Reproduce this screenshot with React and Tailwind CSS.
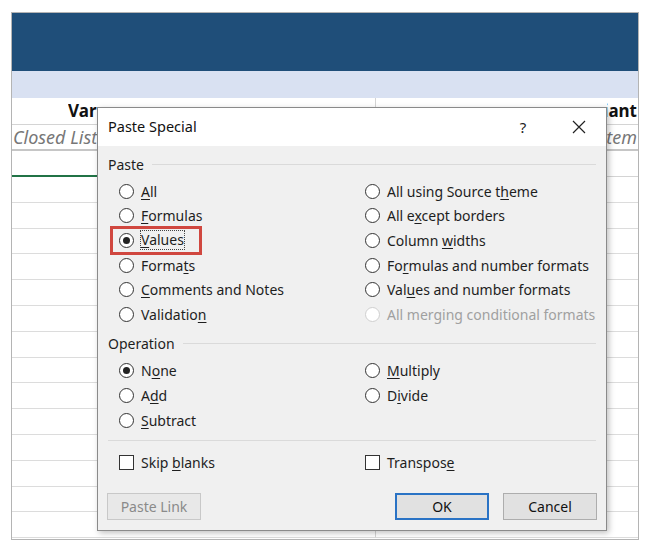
import React from "react";

const FONT = { fontFamily: '"Noto Sans", "Open Sans", sans-serif' };

function Label({ text, k }) {
  // underline the access key letter at index k
  if (k == null || k < 0) return <span>{text}</span>;
  return (
    <span>
      {text.slice(0, k)}
      <span className="underline underline-offset-2">{text[k]}</span>
      {text.slice(k + 1)}
    </span>
  );
}

function Radio({ text, k, checked, disabled, focus }) {
  return (
    <div className="flex items-center h-[24.6px]">
      <span
        className={`w-[15px] h-[15px] rounded-full border bg-white flex items-center justify-center shrink-0 ${
          disabled ? "border-[#cfcfcf]" : "border-[#333]"
        }`}
      >
        {checked && <span className="w-[7px] h-[7px] rounded-full bg-[#222]" />}
      </span>
      <span
        className={`ml-[7px] ${disabled ? "text-[#a0a0a0]" : "text-[#1e1e1e]"} ${
          focus ? "outline outline-1 outline-dotted outline-[#444] outline-offset-0 leading-[18px]" : ""
        }`}
      >
        <Label text={text} k={k} />
      </span>
    </div>
  );
}

function Check({ text, k }) {
  return (
    <div className="flex items-center h-[24px]">
      <span className="w-[15px] h-[15px] border border-[#333] bg-white shrink-0" />
      <span className="ml-[7px] text-[#1e1e1e]">
        <Label text={text} k={k} />
      </span>
    </div>
  );
}

function GroupLabel({ text }) {
  return (
    <div className="flex items-center h-[20px]">
      <span className="text-[#1e1e1e]">{text}</span>
      <span className="flex-1 ml-[8px] border-t border-[#dadada]" />
    </div>
  );
}

function Sheet() {
  const rows = Array.from({ length: 14 });
  return (
    <div className="ml-[11px] mt-[12px] w-[628px] h-[528px] border border-[#b4b4b4] flex flex-col overflow-hidden">
      <div className="h-[58px] bg-[#1f4e79] shrink-0" />
      <div className="h-[27px] bg-[#d9e1f2] shrink-0" />
      <div className="flex h-[27px] border-b border-[#d4d4d4] shrink-0 font-bold text-[17px] text-[#111]">
        <div className="w-[364px] border-r border-[#d4d4d4] flex items-center pl-[56px]">
          {/* the rest of the heading sits under the dialog */}
          <div className="w-[29px] overflow-hidden whitespace-nowrap">Variant Option Name</div>
        </div>
        <div className="flex-1 flex items-center justify-end pr-[1px]">
          <div className="w-[30px] overflow-hidden whitespace-nowrap flex justify-end">
            <span>Default Variant</span>
          </div>
        </div>
      </div>
      <div className="flex h-[26px] border-b-2 border-[#c6c6c6] shrink-0 italic text-[18px] text-[#777]">
        <div className="w-[364px] border-r border-[#d4d4d4] flex items-center pl-[1px]">
          <div className="w-[84px] overflow-hidden whitespace-nowrap">Closed List</div>
        </div>
        <div className="flex-1 flex items-center justify-end pr-[1px]">
          <div className="w-[30px] overflow-hidden whitespace-nowrap flex justify-end">
            <span>System</span>
          </div>
        </div>
      </div>
      <div className="flex h-[26px] shrink-0">
        <div className="w-[364px] border-r border-[#d4d4d4] border-b-2 border-b-[#217346]" />
        <div className="flex-1 border-b border-[#d4d4d4]" />
      </div>
      {rows.map((_, i) => (
        <div key={i} className="flex h-[25.8px] shrink-0">
          <div className="w-[364px] border-r border-[#d4d4d4] border-b border-b-[#dcdcdc]" />
          <div className="flex-1 border-b border-[#dcdcdc]" />
        </div>
      ))}
    </div>
  );
}

function Dialog() {
  return (
    <div
      className="absolute left-[97px] top-[107px] w-[510px] h-[424px] border border-[#8a8a8a] bg-[#f0f0f0] shadow-[2px_2px_6px_rgba(0,0,0,0.25)] flex flex-col text-[14px]"
      style={FONT}
    >
      {/* Title bar */}
      <div className="h-[38px] bg-white flex items-center pl-[10px] shrink-0">
        <span className="text-[14.5px] text-[#111]">Paste Special</span>
        <span className="ml-auto w-[40px] text-center text-[15px] text-[#222] mr-[16px]">?</span>
        <span className="w-[40px] flex items-center justify-center mr-[7px]">
          <svg width="14" height="14" viewBox="0 0 14 14">
            <path d="M1 1 L13 13 M13 1 L1 13" stroke="#222" strokeWidth="1.2" fill="none" />
          </svg>
        </span>
      </div>

      {/* Body */}
      <div className="px-[10px] pt-[8px] flex flex-col flex-1">
        <GroupLabel text="Paste" />
        <div className="mt-[5px] pl-[11px] grid grid-cols-[246px_1fr]">
          <div className="flex flex-col">
            <Radio text="All" k={0} />
            <Radio text="Formulas" k={0} />
            <Radio text="Values" k={0} checked focus />
            <Radio text="Formats" k={5} />
            <Radio text="Comments and Notes" k={0} />
            <Radio text="Validation" k={9} />
          </div>
          <div className="flex flex-col">
            <Radio text="All using Source theme" k={18} />
            <Radio text="All except borders" k={5} />
            <Radio text="Column widths" k={7} />
            <Radio text="Formulas and number formats" k={2} />
            <Radio text="Values and number formats" k={3} />
            <Radio text="All merging conditional formats" disabled />
          </div>
        </div>

        <div className="mt-[7px]">
          <GroupLabel text="Operation" />
        </div>
        <div className="mt-[5px] pl-[11px] grid grid-cols-[246px_1fr]">
          <div className="flex flex-col">
            <Radio text="None" k={1} checked />
            <Radio text="Add" k={1} />
            <Radio text="Subtract" k={0} />
          </div>
          <div className="flex flex-col">
            <Radio text="Multiply" k={0} />
            <Radio text="Divide" k={1} />
          </div>
        </div>

        <div className="mt-[8px] border-t border-[#dadada]" />

        <div className="mt-[9px] pl-[11px] grid grid-cols-[246px_1fr]">
          <Check text="Skip blanks" k={5} />
          <Check text="Transpose" k={8} />
        </div>

        <div className="mt-[19px] flex items-center -mx-[1px]">
          <button className="w-[94px] h-[27px] border border-[#c8c8c8] bg-[#e8e8e8] text-[#8a8a8a]">
            Paste Link
          </button>
          <button className="ml-auto w-[94px] h-[27px] border-2 border-[#2a73c5] bg-[#e1e1e1] text-[#111]">
            OK
          </button>
          <button className="ml-[14px] w-[94px] h-[27px] border border-[#adadad] bg-[#e1e1e1] text-[#111]">
            Cancel
          </button>
        </div>
      </div>

      {/* annotation around selected option */}
      <div className="absolute left-[12px] top-[118px] w-[92px] h-[29px] border-[3px] border-[#d0473f]" />
    </div>
  );
}

export default function App() {
  return (
    <div className="relative w-[652px] h-[549px] bg-white overflow-hidden" style={{ fontFamily: '"Noto Sans", sans-serif' }}>
      <Sheet />
      <Dialog />
    </div>
  );
}
